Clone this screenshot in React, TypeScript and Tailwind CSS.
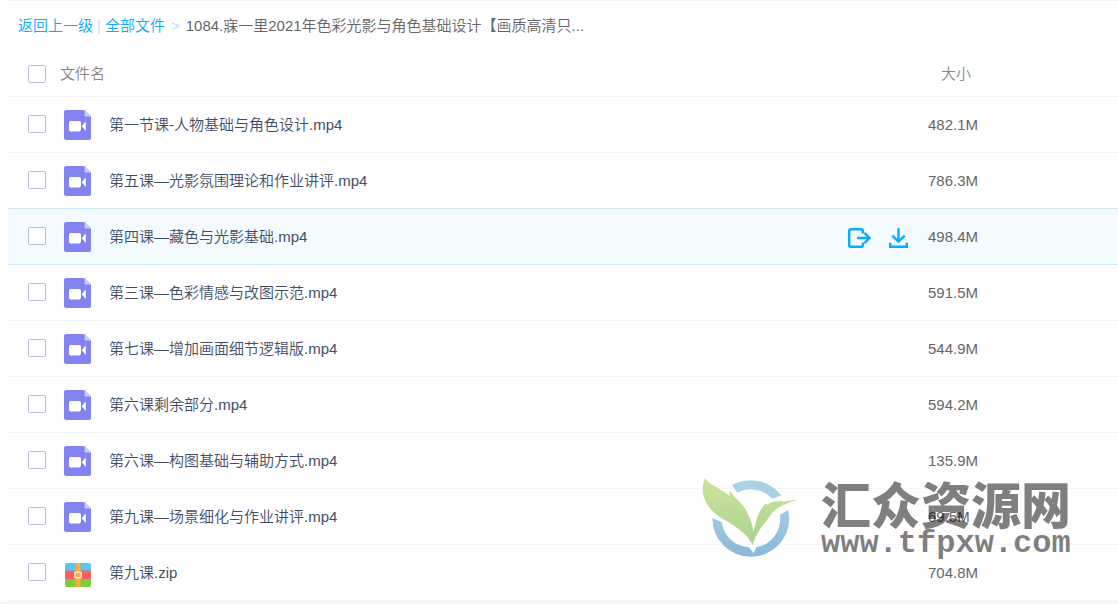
import React, { useState } from 'react';

interface FileItem {
  id: number;
  name: string;
  size: string;
  type: 'video' | 'zip';
}

const FILES: FileItem[] = [
  { id: 1, name: '第一节课-人物基础与角色设计.mp4', size: '482.1M', type: 'video' },
  { id: 2, name: '第五课—光影氛围理论和作业讲评.mp4', size: '786.3M', type: 'video' },
  { id: 3, name: '第四课—藏色与光影基础.mp4', size: '498.4M', type: 'video' },
  { id: 4, name: '第三课—色彩情感与改图示范.mp4', size: '591.5M', type: 'video' },
  { id: 5, name: '第七课—增加画面细节逻辑版.mp4', size: '544.9M', type: 'video' },
  { id: 6, name: '第六课剩余部分.mp4', size: '594.2M', type: 'video' },
  { id: 7, name: '第六课—构图基础与辅助方式.mp4', size: '135.9M', type: 'video' },
  { id: 8, name: '第九课—场景细化与作业讲评.mp4', size: '69.5M', type: 'video' },
  { id: 9, name: '第九课.zip', size: '704.8M', type: 'zip' },
];

const VideoIcon = () => (
  <svg width="27" height="30" viewBox="0 0 27 30" className="block">
    <path d="M2 0H20.5L27 6.5V28a2 2 0 0 1-2 2H2a2 2 0 0 1-2-2V2a2 2 0 0 1 2-2Z" fill="#8283f1" />
    <path d="M20.5 0L27 6.5H22a1.5 1.5 0 0 1-1.5-1.5Z" fill="#c9c9fa" />
    <rect x="5" y="11" width="12" height="10.5" rx="2" fill="#fff" />
    <path d="M17.8 16.2L21 12.2q.8-.5.8.4v7.4q0 .9-.8.3Z" fill="#fff" />
  </svg>
);

const ZipIcon = () => (
  <svg width="27" height="30" viewBox="0 -4 27 30" className="block">
    <path d="M3 1H25a2 2 0 0 1 2 2V9H1V3a2 2 0 0 1 2-2Z" fill="#55c7f7" />
    <path d="M1 8.5H27V17H1Z" fill="#fb5f5f" />
    <path d="M1 17H27V23a2 2 0 0 1-2 2H3a2 2 0 0 1-2-2Z" fill="#7dcd3a" />
    <rect x="11.5" y="1" width="5" height="24" fill="#fcab3d" />
    <rect x="10.8" y="10.3" width="6.4" height="5.4" rx="0.8" fill="#fcab3d" stroke="#ffeccb" strokeWidth="1.4" />
  </svg>
);

const ShareIcon = () => (
  <svg width="23" height="20" viewBox="0 0 23 20" fill="none" stroke="#09aaff" strokeWidth="2.4" className="block">
    <path d="M14.8 5.6V2.8a1.6 1.6 0 0 0-1.6-1.6H2.8a1.6 1.6 0 0 0-1.6 1.6V17.2a1.6 1.6 0 0 0 1.6 1.6H13.2a1.6 1.6 0 0 0 1.6-1.6V14.6" />
    <path d="M9 10H21.5M16.4 4.8L21.6 10l-5.2 5.2" />
  </svg>
);

const DownloadIcon = () => (
  <svg width="19" height="20" viewBox="0 0 19 20" fill="none" stroke="#09aaff" strokeWidth="2.4" className="block">
    <path d="M9.5 0.3V13.5M3.3 7.6l6.2 6 6.2-6" />
    <path d="M1.2 14.8V18.8H17.8V14.8" />
  </svg>
);

const Checkbox: React.FC<{ label: string }> = ({ label }) => (
  <input
    type="checkbox"
    aria-label={label}
    className="block h-[18px] w-[18px] appearance-none rounded-xs border border-[#b4c1d4] bg-white checked:bg-[#09aaff]"
  />
);

const Watermark = () => (
  <div className="pointer-events-none absolute right-[47px] bottom-[44px] flex items-end gap-[22px]">
    <svg width="98" height="84" viewBox="36 20 294 252">
      <defs>
        <linearGradient id="ring" x1="0" y1="0" x2="0" y2="1">
          <stop offset="0" stopColor="#a1cbe1" />
          <stop offset="1" stopColor="#89b9dc" />
        </linearGradient>
        <linearGradient id="leaf" x1="0" y1="0" x2="0" y2="1">
          <stop offset="0" stopColor="#cde595" />
          <stop offset="1" stopColor="#a9d295" />
        </linearGradient>
      </defs>
      <path d="M129 47A116 116 0 0 1 277 78L250 88A88 88 0 0 0 145 70Z" fill="#a9d3e4" />
      <path
        d="M70 146A115.5 115.5 0 0 0 301 148Q301 135 297 121L273 137A87 87 0 0 1 202 234L194 252L180 234A87 87 0 0 1 98 158Z"
        fill="url(#ring)"
      />
      <path
        d="M48 26C58 45 95 58 122 80L121 66C135 76 134 82 142 88C165 106 186 140 193 186C205 150 205 125 232 102L234 106C245 98 262 95 272 96L275 92C275 97 284 97 290 96L323 91C295 103 270 108 250 130C225 165 200 190 191 228C180 200 150 175 100 148C60 125 36 85 42 48Q43 38 48 26Z"
        fill="url(#leaf)"
      />
    </svg>
    <div className="text-black/50">
      <p className="font-['Noto_Sans_CJK_SC',sans-serif] text-[50px] leading-[52px] font-black">汇众资源网</p>
      <p className="font-['Liberation_Mono',monospace] text-[32px] leading-8 font-bold">www.tfpxw.com</p>
    </div>
  </div>
);

export default function App() {
  const [activeId, setActiveId] = useState(3);

  const borderFor = (index: number) => {
    const touchesActive = FILES[index].id === activeId || FILES[index + 1]?.id === activeId;
    return touchesActive ? 'border-[#d0e8f8]' : 'border-[#f2f6fd]';
  };

  return (
    <div className="relative bg-white pl-2 font-['Liberation_Sans','Noto_Sans_CJK_SC',sans-serif] text-[15px] leading-5 font-[350]">
      <nav className="flex h-[52px] items-center border-t border-[#f3f3f3] pb-[2px] pl-[10px] text-[#666]">
        <a href="#back" className="text-[#09aaff]">返回上一级</a>
        <span className="px-1 text-[#c4dbfe]">|</span>
        <a href="#all" className="text-[#09aaff]">全部文件</a>
        <span className="px-[6px] text-[#c4dbfe]">&gt;</span>
        <span>1084.寐一里2021年色彩光影与角色基础设计【画质高清只...</span>
      </nav>

      <table className="w-full border-separate border-spacing-0 text-left">
        <thead className="text-[#888]">
          <tr>
            <th className="h-[45px] w-[52px] border-b border-[#f6f6f6] p-0 pl-5">
              <Checkbox label="全选" />
            </th>
            <th className="border-b border-[#f6f6f6] p-0 font-[350]">文件名</th>
            <th className="w-[190px] border-b border-[#f6f6f6] p-0 pl-[13px] font-[350]">大小</th>
          </tr>
        </thead>
        <tbody>
          {FILES.map((file, index) => {
            const active = file.id === activeId;
            const border = borderFor(index);
            return (
              <tr key={file.id} className={active ? 'bg-[#f3fbff]' : 'bg-white'} onMouseEnter={() => setActiveId(file.id)}>
                <td className={`h-14 border-b p-0 pb-[2px] pl-5 ${border}`}>
                  <Checkbox label={file.name} />
                </td>
                <td className={`border-b p-0 pl-1 ${border}`}>
                  <div className="flex items-center">
                    {file.type === 'video' ? <VideoIcon /> : <ZipIcon />}
                    <span className="flex-1 pl-[18px] text-[#424e67]">{file.name}</span>
                    {active && (
                      <div className="flex items-center gap-[18px] pt-[2px] pr-5">
                        <button type="button" aria-label="分享">
                          <ShareIcon />
                        </button>
                        <button type="button" aria-label="下载">
                          <DownloadIcon />
                        </button>
                      </div>
                    )}
                  </div>
                </td>
                <td className={`border-b p-0 text-[#666] ${border}`}>{file.size}</td>
              </tr>
            );
          })}
        </tbody>
      </table>
      <div className="-ml-2 h-[3px] bg-[#f7f7f7]" />
      <Watermark />
    </div>
  );
}
